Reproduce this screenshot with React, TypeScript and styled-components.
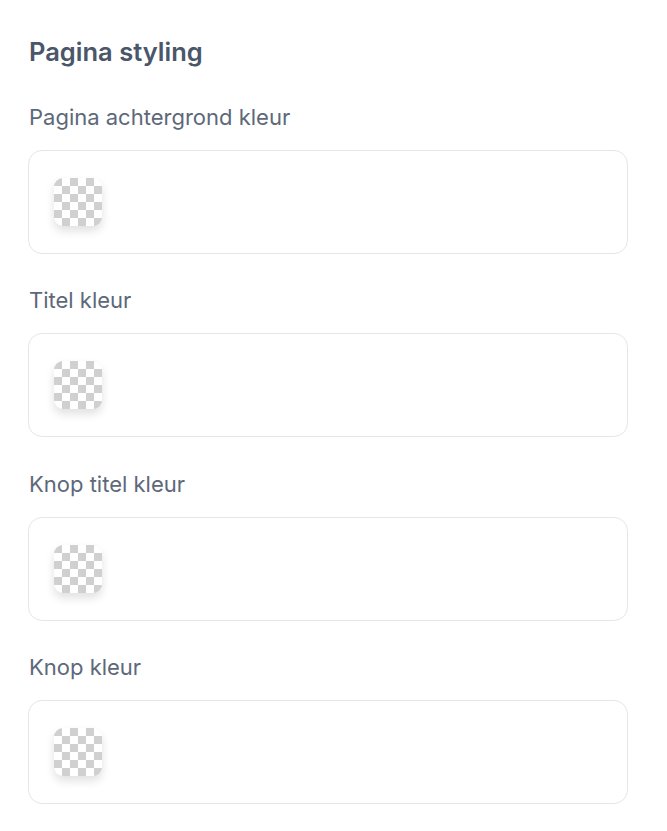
import React from "react";
import styled, { createGlobalStyle } from "styled-components";

const GlobalStyle = createGlobalStyle`
  html, body {
    margin: 0;
    padding: 0;
    background: #ffffff;
  }
  body {
    font-family: "Inter", "Noto Sans", "Liberation Sans", sans-serif;
  }
`;

const Page = styled.div`
  display: flex;
  flex-direction: column;
  padding: 36px 39px 0 28px;
`;

const Title = styled.h2`
  margin: 0 0 0 1px;
  font-size: 25.5px;
  line-height: 32px;
  font-weight: 600;
  color: #4a5669;
`;

const Field = styled.div`
  display: flex;
  flex-direction: column;
  margin-top: 34px;
  & + & {
    margin-top: 31.4px;
  }
`;

const Label = styled.label`
  margin: 0 0 18px 1px;
  font-size: 22px;
  line-height: 30px;
  font-weight: 400;
  color: #5d6879;
`;

const Box = styled.div`
  display: flex;
  align-items: center;
  height: 104px;
  box-sizing: border-box;
  padding: 0 25px;
  border: 1.5px solid #e3e6eb;
  border-radius: 14px;
  background: #ffffff;
`;

const Swatch = styled.div<{ $color?: string }>`
  width: 48px;
  height: 48px;
  border-radius: 9px;
  background-color: #ffffff;
  background-image: ${(p) =>
    p.$color
      ? `linear-gradient(${p.$color}, ${p.$color})`
      : `conic-gradient(#ffffff 0 25%, #d0d0d0 0 50%, #ffffff 0 75%, #d0d0d0 0)`};
  background-size: 16px 16px;
  box-shadow: 0 5px 10px rgba(0, 0, 0, 0.12);
`;

const fields = [
  "Pagina achtergrond kleur",
  "Titel kleur",
  "Knop titel kleur",
  "Knop kleur",
];

export default function App() {
  return (
    <>
      <GlobalStyle />
      <Page>
        <Title>Pagina styling</Title>
        {fields.map((f) => (
          <Field key={f}>
            <Label>{f}</Label>
            <Box>
              <Swatch />
            </Box>
          </Field>
        ))}
      </Page>
    </>
  );
}
